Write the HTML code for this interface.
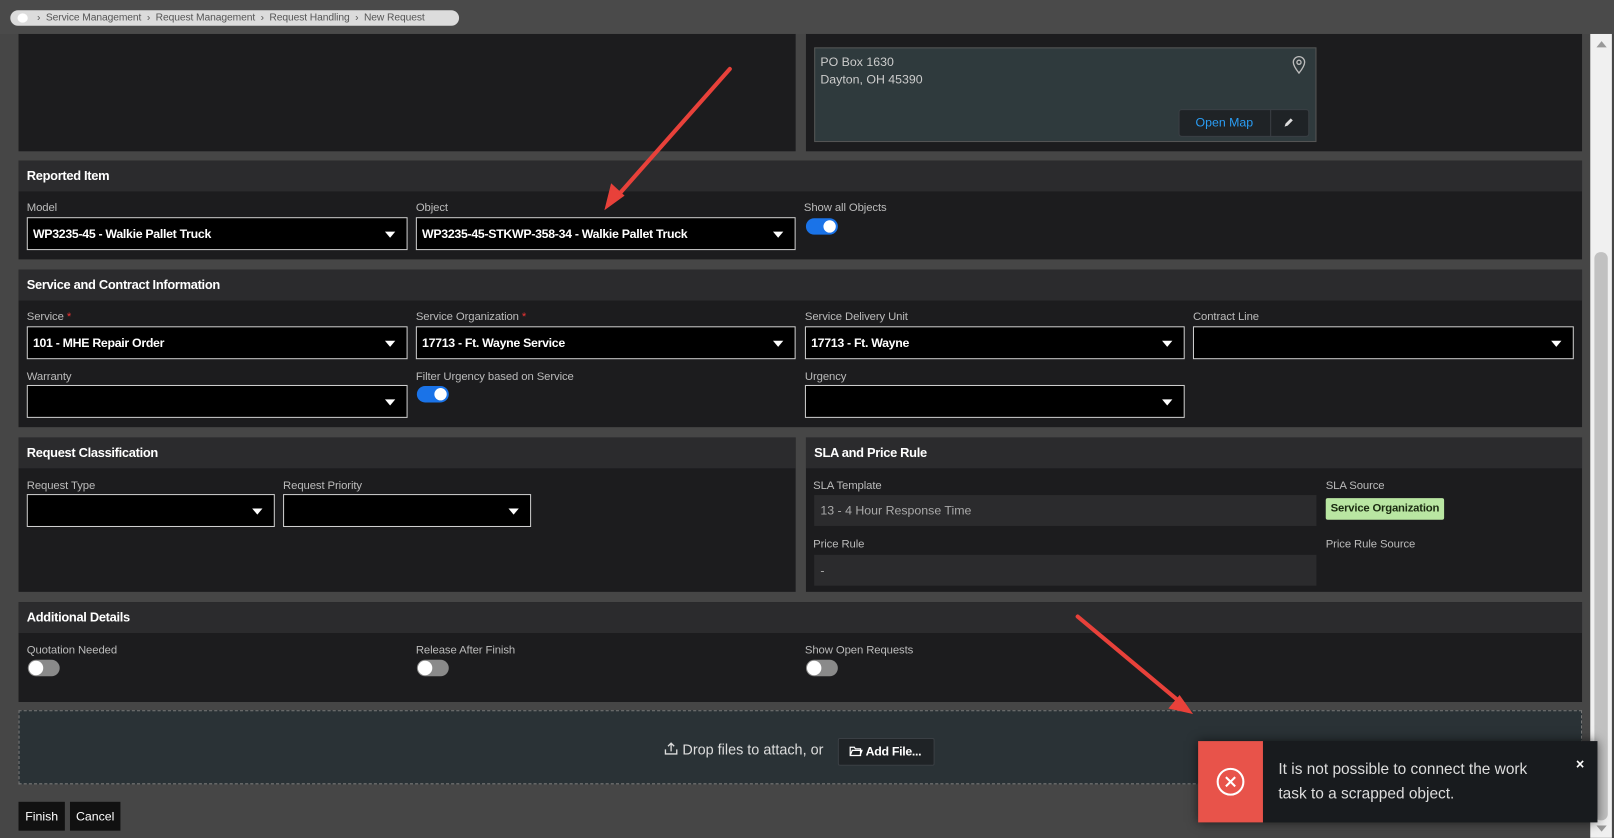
<!DOCTYPE html>
<html><head><meta charset="utf-8">
<style>
html,body{margin:0;padding:0;width:1614px;height:838px;overflow:hidden;background:#464646;}
#w{position:absolute;left:0;top:0;width:1568px;height:814px;transform:scale(1.0293);transform-origin:0 0;font-family:"Liberation Sans",sans-serif;background:#464646;}
.a{position:absolute;box-sizing:border-box;}
.top{left:0;top:0;width:1568px;height:33px;background:#4a4a4a;}
.bc{left:10px;top:10px;width:436px;height:15px;background:#dcdcdc;border-radius:8px;font-size:10px;color:#555;line-height:15px;padding-left:26px;white-space:nowrap;letter-spacing:-0.1px;}
.pan{background:#1c1c1e;}
.hd{background:#2b2b2d;height:30px;color:#fff;font-weight:bold;font-size:12.5px;line-height:30px;padding-left:8px;letter-spacing:-0.3px;}
.lb{font-size:11px;color:#bbb;letter-spacing:-0.1px;}
.in{background:#000;border:1px solid #cfcfcf;height:32px;color:#fff;font-size:12px;font-weight:bold;line-height:30px;padding-left:5px;letter-spacing:-0.3px;}
.in:after{content:"";position:absolute;right:11px;top:13px;border-left:5px solid transparent;border-right:5px solid transparent;border-top:6px solid #fff;}
.ton{width:31px;height:16px;border-radius:8px;background:#1a73e8;}
.ton:after{content:"";position:absolute;right:2px;top:2px;width:12px;height:12px;border-radius:50%;background:#fff;}
.tof{width:31px;height:16px;border-radius:8px;background:#8a8a8a;}
.tof:after{content:"";position:absolute;left:1px;top:1px;width:14px;height:14px;border-radius:50%;background:#fff;}
.ro{background:#2b2b2d;color:#aaa;font-size:12px;line-height:30px;padding-left:6px;height:30px;}
.sq{color:#e33;}
</style></head><body><div id="w">
<div class="a top"></div>
<div class="a bc"><span style="position:absolute;left:7px;top:3px;width:10px;height:9px;border-radius:50%;background:#fff"></span>›&nbsp; Service Management &nbsp;›&nbsp; Request Management &nbsp;›&nbsp; Request Handling &nbsp;›&nbsp; New Request</div>

<div class="a pan" style="left:18px;top:33px;width:755px;height:114px"></div>
<div class="a pan" style="left:783px;top:33px;width:754px;height:114px"></div>
<div class="a" style="left:791px;top:46px;width:488px;height:92px;background:#2f3a3d;border:1px solid #555;color:#ccc;font-size:12px;line-height:17px;padding:5px 5px">PO Box 1630<br>Dayton, OH 45390</div>
<svg class="a" style="left:1255px;top:54px" width="14" height="18" viewBox="0 0 14 18"><path d="M7 17C3 12 1.5 9 1.5 6.5a5.5 5.5 0 0 1 11 0C12.5 9 11 12 7 17z" fill="none" stroke="#bbb" stroke-width="1.3"/><circle cx="7" cy="6.5" r="2" fill="none" stroke="#bbb" stroke-width="1.3"/></svg>
<div class="a" style="left:1145px;top:106px;width:127px;height:27px;background:#1f2326;border:1px solid #3a3f44;border-radius:3px"></div>
<div class="a" style="left:1145px;top:106px;width:90px;height:27px;color:#2a9df4;font-size:12px;line-height:27px;text-align:center;border-right:1px solid #3a3f44">Open Map</div>
<svg class="a" style="left:1246px;top:113px" width="12" height="12" viewBox="0 0 12 12"><path d="M2 10l1-3 5-5 2 2-5 5z" fill="#ddd"/></svg>

<div class="a pan" style="left:18px;top:156px;width:1519px;height:96px"><div class="hd">Reported Item</div></div>
<div class="a lb" style="left:26px;top:196px">Model</div>
<div class="a lb" style="left:404px;top:196px">Object</div>
<div class="a lb" style="left:781px;top:196px">Show all Objects</div>
<div class="a in" style="left:26px;top:211px;width:370px">WP3235-45 - Walkie Pallet Truck</div>
<div class="a in" style="left:404px;top:211px;width:369px">WP3235-45-STKWP-358-34 - Walkie Pallet Truck</div>
<div class="a ton" style="left:783px;top:212px"></div>

<div class="a pan" style="left:18px;top:262px;width:1519px;height:153px"><div class="hd">Service and Contract Information</div></div>
<div class="a lb" style="left:26px;top:302px">Service <span class="sq">*</span></div>
<div class="a lb" style="left:404px;top:302px">Service Organization <span class="sq">*</span></div>
<div class="a lb" style="left:782px;top:302px">Service Delivery Unit</div>
<div class="a lb" style="left:1159px;top:302px">Contract Line</div>
<div class="a in" style="left:26px;top:317px;width:370px">101 - MHE Repair Order</div>
<div class="a in" style="left:404px;top:317px;width:369px">17713 - Ft. Wayne Service</div>
<div class="a in" style="left:782px;top:317px;width:369px">17713 - Ft. Wayne</div>
<div class="a in" style="left:1159px;top:317px;width:370px"></div>
<div class="a lb" style="left:26px;top:360px">Warranty</div>
<div class="a lb" style="left:404px;top:360px">Filter Urgency based on Service</div>
<div class="a lb" style="left:782px;top:360px">Urgency</div>
<div class="a in" style="left:26px;top:374px;width:370px"></div>
<div class="a ton" style="left:405px;top:375px"></div>
<div class="a in" style="left:782px;top:374px;width:369px"></div>

<div class="a pan" style="left:18px;top:425px;width:755px;height:150px"><div class="hd">Request Classification</div></div>
<div class="a lb" style="left:26px;top:466px">Request Type</div>
<div class="a lb" style="left:275px;top:466px">Request Priority</div>
<div class="a in" style="left:26px;top:480px;width:241px"></div>
<div class="a in" style="left:275px;top:480px;width:241px"></div>

<div class="a pan" style="left:783px;top:425px;width:754px;height:150px"><div class="hd">SLA and Price Rule</div></div>
<div class="a lb" style="left:790px;top:466px">SLA Template</div>
<div class="a lb" style="left:1288px;top:466px">SLA Source</div>
<div class="a ro" style="left:791px;top:481px;width:488px">13 - 4 Hour Response Time</div>
<div class="a" style="left:1288px;top:484px;width:115px;height:21px;background:#b9e6a2;border-radius:2px;color:#1a2a10;font-size:11px;font-weight:bold;line-height:21px;text-align:center;letter-spacing:-0.2px">Service Organization</div>
<div class="a lb" style="left:790px;top:523px">Price Rule</div>
<div class="a lb" style="left:1288px;top:523px">Price Rule Source</div>
<div class="a ro" style="left:791px;top:539px;width:488px">-</div>

<div class="a pan" style="left:18px;top:585px;width:1519px;height:97px"><div class="hd">Additional Details</div></div>
<div class="a lb" style="left:26px;top:626px">Quotation Needed</div>
<div class="a lb" style="left:404px;top:626px">Release After Finish</div>
<div class="a lb" style="left:782px;top:626px">Show Open Requests</div>
<div class="a tof" style="left:27px;top:641px"></div>
<div class="a tof" style="left:405px;top:641px"></div>
<div class="a tof" style="left:783px;top:641px"></div>

<div class="a" style="left:18px;top:690px;width:1519px;height:72px;background:#2a3236;border:1.5px dashed #777"></div>
<svg class="a" style="left:645px;top:720px" width="14" height="14" viewBox="0 0 14 14"><path d="M7 10V2M4 5l3-3 3 3M1.5 8v4.5h11V8" fill="none" stroke="#ddd" stroke-width="1.3"/></svg>
<div class="a" style="left:663px;top:720px;color:#ddd;font-size:14px">Drop files to attach, or</div>
<div class="a" style="left:814px;top:717px;width:94px;height:27px;background:#1f2326;border:1px solid #3a3f44;border-radius:2px;color:#fff;font-size:12px;font-weight:bold;line-height:25px;padding-left:26px;letter-spacing:-0.3px">Add File...</div>
<svg class="a" style="left:825px;top:724px" width="13" height="12" viewBox="0 0 13 12"><path d="M1 2h4l1 1.5h5V10H1zM1 10l2-5h9.5l-2 5" fill="none" stroke="#fff" stroke-width="1.2"/></svg>

<div class="a" style="left:18px;top:779px;width:45px;height:28px;background:#111;color:#fff;font-size:12px;line-height:28px;text-align:center">Finish</div>
<div class="a" style="left:68px;top:779px;width:49px;height:28px;background:#111;color:#fff;font-size:12px;line-height:28px;text-align:center">Cancel</div>

<div class="a" style="left:1545px;top:33px;width:21px;height:781px;background:#f0f0f0"></div>
<div class="a" style="left:1549px;top:245px;width:13px;height:552px;background:#c1c1c1;border-radius:6px"></div>
<div class="a" style="left:1551px;top:40px;border-left:5px solid transparent;border-right:5px solid transparent;border-bottom:6px solid #999"></div>
<div class="a" style="left:1551px;top:802px;border-left:5px solid transparent;border-right:5px solid transparent;border-top:6px solid #999"></div>

<div class="a" style="left:1164px;top:720px;width:388px;height:79px;background:#181b1e;box-shadow:0 0 10px rgba(0,0,0,.6)"></div>
<div class="a" style="left:1164px;top:720px;width:63px;height:79px;background:#e8534a"></div>
<svg class="a" style="left:1181px;top:745px" width="29" height="29" viewBox="0 0 29 29"><circle cx="14.5" cy="14.5" r="12.5" fill="none" stroke="#fff" stroke-width="2"/><path d="M10 10l9 9M19 10l-9 9" stroke="#fff" stroke-width="2"/></svg>
<div class="a" style="left:1242px;top:736px;color:#ddd;font-size:15px;line-height:24px;width:270px">It is not possible to connect the work task to a scrapped object.</div>
<div class="a" style="left:1531px;top:734px;color:#fff;font-size:14px;font-weight:bold">×</div>

<svg class="a" style="left:0;top:0" width="1568" height="814"><g stroke="#e8413a" stroke-width="4" fill="#e8413a" stroke-linecap="round"><line x1="709" y1="67" x2="602" y2="188"/><path d="M588 203l6-24 12 11z" stroke-width="1"/><line x1="1047" y1="599" x2="1144" y2="680"/><path d="M1158 693l-22-5 10-12z" stroke-width="1"/></g></svg>
</div></body></html>
